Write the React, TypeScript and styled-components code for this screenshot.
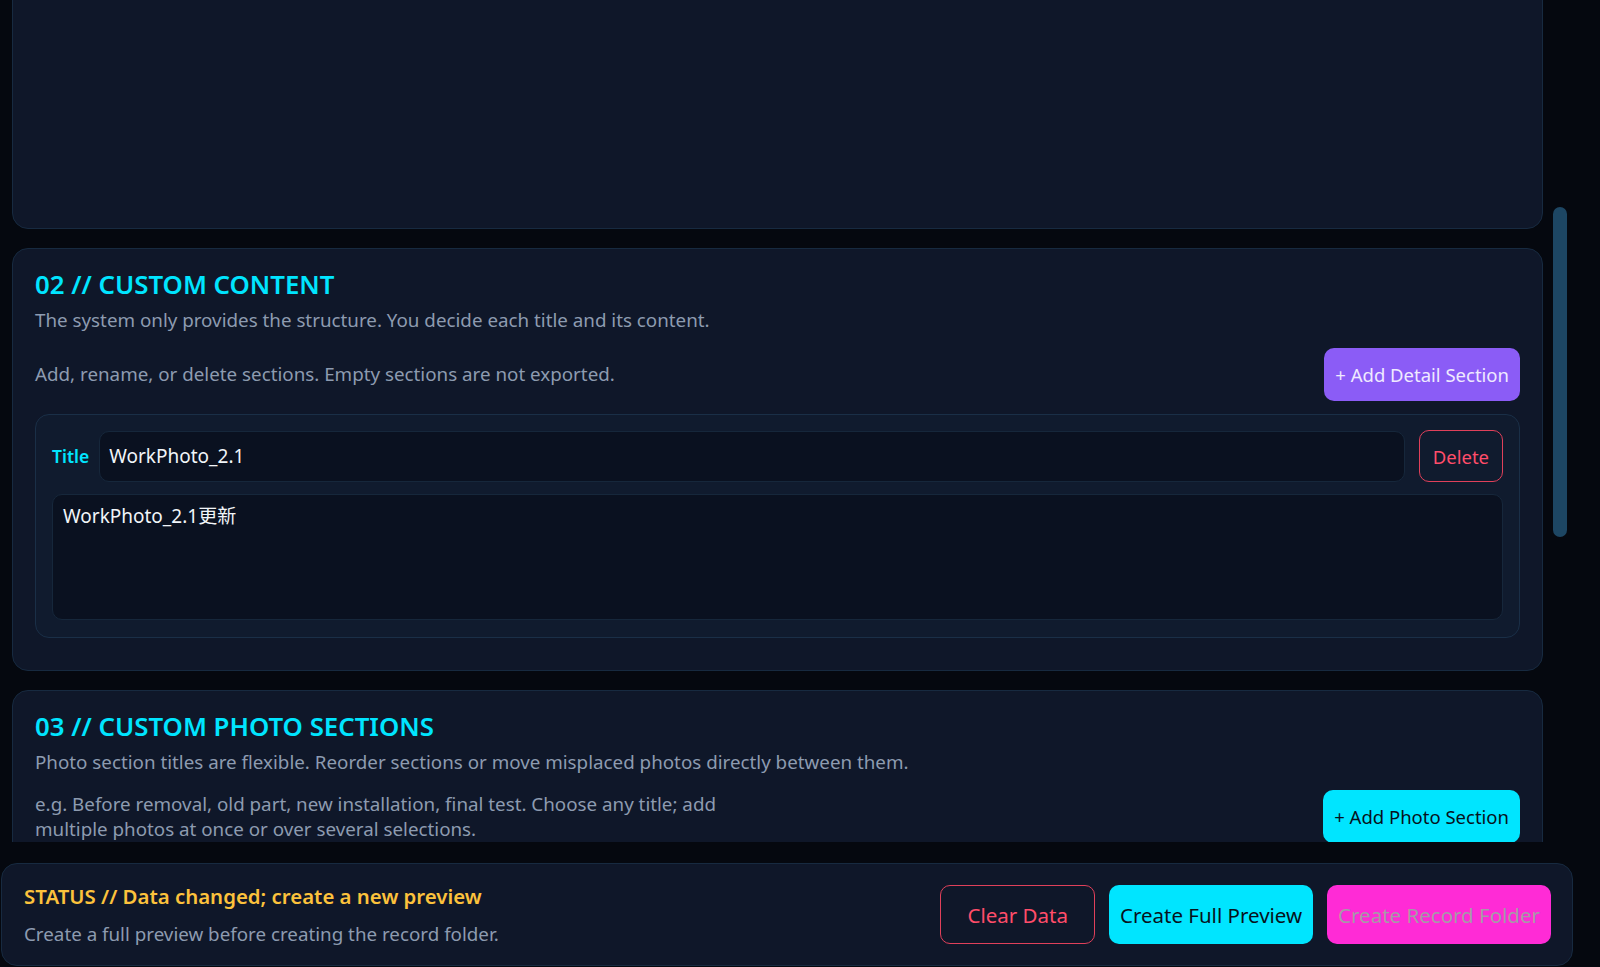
import React, { useLayoutEffect, useRef, useState } from 'react';
import styled, { createGlobalStyle } from 'styled-components';

const GlobalStyle = createGlobalStyle`
	html, body {
		margin: 0;
		background: #05080f;
	}
	body {
		font-family: "Noto Sans", "Noto Sans CJK TC", sans-serif;
		color: #e6edf5;
		overflow: hidden;
	}
`;

const Shell = styled.div`
	width: 1573px;
	height: 967px;
	display: flex;
	flex-direction: column;
`;

const Viewport = styled.div`
	display: flex;
	height: 842px;
	flex-shrink: 0;
`;

const ScrollArea = styled.main`
	position: relative;
	width: 1553px;
	height: 100%;
	overflow-y: scroll;
	scrollbar-width: none;
	box-sizing: border-box;
	padding: 12px 10px 12px 12px;
	display: flex;
	flex-direction: column;
	gap: 19px;

	&::-webkit-scrollbar {
		display: none;
	}
`;

const ScrollRail = styled.div`
	width: 14px;
	height: 100%;
`;

const ScrollThumb = styled.div`
	width: 14px;
	border-radius: 7px;
	background: #1d4663;
`;

const Card = styled.section<{ $height?: number; $minHeight?: number }>`
	flex-shrink: 0;
	box-sizing: border-box;
	background: #0f1729;
	border: 1px solid #172a40;
	border-radius: 16px;
	padding: 20px 22px 32px;
	height: ${(p) => (p.$height ? `${p.$height}px` : 'auto')};
	min-height: ${(p) => (p.$minHeight ? `${p.$minHeight}px` : '0')};
`;

const SectionTitle = styled.h2`
	margin: 0;
	color: #00e5ff;
	font-size: 25.8px;
	font-weight: 600;
	line-height: 31px;
`;

const Desc = styled.p`
	margin: 7px 0 0;
	color: #8d9bb0;
	font-size: 18.8px;
	line-height: 26px;
`;

const ActionRow = styled.div`
	display: flex;
	align-items: center;
	justify-content: space-between;
	gap: 24px;
	margin-top: 15px;
`;

const RowText = styled.p<{ $maxWidth?: number }>`
	margin: 0;
	color: #8d9bb0;
	font-size: 18.8px;
	line-height: 25px;
	max-width: ${(p) => (p.$maxWidth ? `${p.$maxWidth}px` : 'none')};
`;

const AddButton = styled.button<{ $tone: 'violet' | 'cyan' }>`
	flex-shrink: 0;
	height: 53px;
	padding: 0 11px;
	border: none;
	border-radius: 10px;
	font-family: inherit;
	font-size: 18.5px;
	background: ${(p) => (p.$tone === 'violet' ? '#8b5cf6' : '#00e5ff')};
	color: ${(p) => (p.$tone === 'violet' ? '#efeaff' : '#07121c')};
`;

const ItemBox = styled.div`
	margin-top: 13px;
	background: #101b2e;
	border: 1px solid #1a2f47;
	border-radius: 14px;
	padding: 15px 16px 17px;
	display: flex;
	flex-direction: column;
	gap: 12px;
`;

const TitleRow = styled.div`
	display: flex;
	align-items: center;
	gap: 10px;
`;

const FieldLabel = styled.label`
	color: #00e5ff;
	font-weight: 600;
	font-size: 17.5px;
`;

const TextInput = styled.input`
	flex: 1;
	height: 51px;
	box-sizing: border-box;
	background: #0a1120;
	border: 1px solid #16273b;
	border-radius: 10px;
	color: #f1f5f9;
	font-family: inherit;
	font-size: 19px;
	padding: 0 9px;
	outline: none;
`;

const DangerButton = styled.button`
	height: 52px;
	margin-left: 4px;
	padding: 0 13px;
	background: transparent;
	border: 1px solid #e0405a;
	border-radius: 10px;
	color: #ff4d6a;
	font-family: inherit;
	font-size: 18.5px;
`;

const TextArea = styled.textarea<{ $height: number }>`
	display: block;
	height: ${(p) => p.$height}px;
	box-sizing: border-box;
	resize: none;
	background: #0a1120;
	border: 1px solid #16273b;
	border-radius: 10px;
	color: #f1f5f9;
	font-family: inherit;
	font-size: 19px;
	line-height: 26px;
	padding: 8px 10px;
	outline: none;
`;

const DropZone = styled.div`
	height: 220px;
	border: 1px dashed #1f3a55;
	border-radius: 10px;
	display: flex;
	align-items: center;
	justify-content: center;
	color: #5d6d84;
	font-size: 17px;
`;

const Footer = styled.footer`
	margin: 21px 0 1px 1px;
	height: 103px;
	box-sizing: border-box;
	background: #0f1729;
	border: 1px solid #172a40;
	border-radius: 16px;
	padding: 0 21px 0 22px;
	display: flex;
	align-items: center;
	justify-content: space-between;
`;

const StatusBlock = styled.div`
	display: flex;
	flex-direction: column;
	gap: 10px;
`;

const StatusTitle = styled.div`
	color: #fcc23c;
	font-size: 20.4px;
	font-weight: 600;
	line-height: 28px;
`;

const StatusText = styled.div`
	color: #8d9bb0;
	font-size: 18.8px;
	line-height: 28px;
`;

const FooterActions = styled.div`
	display: flex;
	gap: 14px;
`;

const FooterButton = styled.button<{ $variant: 'outline' | 'cyan' | 'magenta' }>`
	height: 59px;
	padding: 0 ${(p) => (p.$variant === 'outline' ? '26px' : '10px')};
	border-radius: 10px;
	font-family: inherit;
	font-size: 20.5px;
	border: 1px solid ${(p) => (p.$variant === 'outline' ? '#e0405a' : 'transparent')};
	background: ${(p) =>
		p.$variant === 'outline' ? 'transparent' : p.$variant === 'cyan' ? '#00e5ff' : '#ff2bd6'};
	color: ${(p) =>
		p.$variant === 'outline' ? '#ff4d6a' : p.$variant === 'cyan' ? '#07121c' : '#a69aa8'};
`;

export default function App() {
	const scrollRef = useRef<HTMLElement>(null);
	const contentRef = useRef<HTMLElement>(null);
	const [thumb, setThumb] = useState({ top: 0, size: 0 });

	const measure = () => {
		const el = scrollRef.current;
		if (!el) return;
		const size = (el.clientHeight * el.clientHeight) / el.scrollHeight;
		const range = el.scrollHeight - el.clientHeight;
		const top = range > 0 ? (el.scrollTop / range) * (el.clientHeight - size) : 0;
		setThumb({ top, size });
	};

	useLayoutEffect(() => {
		if (scrollRef.current && contentRef.current) {
			scrollRef.current.scrollTop = contentRef.current.offsetTop - 248;
		}
		measure();
	}, []);

	return (
		<>
			<GlobalStyle />
			<Shell>
				<Viewport>
					<ScrollArea ref={scrollRef} onScroll={measure}>
						<Card $height={745}>
							<SectionTitle>01 // BASIC INFO</SectionTitle>
							<Desc>Record details used for the folder name and the exported report.</Desc>
						</Card>

						<Card ref={contentRef}>
							<SectionTitle>02 // CUSTOM CONTENT</SectionTitle>
							<Desc>The system only provides the structure. You decide each title and its content.</Desc>
							<ActionRow>
								<RowText>Add, rename, or delete sections. Empty sections are not exported.</RowText>
								<AddButton $tone="violet">+ Add Detail Section</AddButton>
							</ActionRow>
							<ItemBox>
								<TitleRow>
									<FieldLabel>Title</FieldLabel>
									<TextInput defaultValue="WorkPhoto_2.1" />
									<DangerButton>Delete</DangerButton>
								</TitleRow>
								<TextArea $height={126} defaultValue="WorkPhoto_2.1更新" />
							</ItemBox>
						</Card>

						<Card $minHeight={918}>
							<SectionTitle>03 // CUSTOM PHOTO SECTIONS</SectionTitle>
							<Desc>
								Photo section titles are flexible. Reorder sections or move misplaced photos directly between them.
							</Desc>
							<ActionRow>
								<RowText $maxWidth={690}>
									e.g. Before removal, old part, new installation, final test. Choose any title; add multiple photos
									at once or over several selections.
								</RowText>
								<AddButton $tone="cyan">+ Add Photo Section</AddButton>
							</ActionRow>
							<ItemBox>
								<TitleRow>
									<FieldLabel>Title</FieldLabel>
									<TextInput defaultValue="Before removal" />
									<DangerButton>Delete</DangerButton>
								</TitleRow>
								<DropZone>Drop photos here or click to select</DropZone>
							</ItemBox>
						</Card>
					</ScrollArea>
					<ScrollRail>
						<ScrollThumb style={{ marginTop: thumb.top, height: thumb.size }} />
					</ScrollRail>
				</Viewport>

				<Footer>
					<StatusBlock>
						<StatusTitle>STATUS // Data changed; create a new preview</StatusTitle>
						<StatusText>Create a full preview before creating the record folder.</StatusText>
					</StatusBlock>
					<FooterActions>
						<FooterButton $variant="outline">Clear Data</FooterButton>
						<FooterButton $variant="cyan">Create Full Preview</FooterButton>
						<FooterButton $variant="magenta">Create Record Folder</FooterButton>
					</FooterActions>
				</Footer>
			</Shell>
		</>
	);
}
